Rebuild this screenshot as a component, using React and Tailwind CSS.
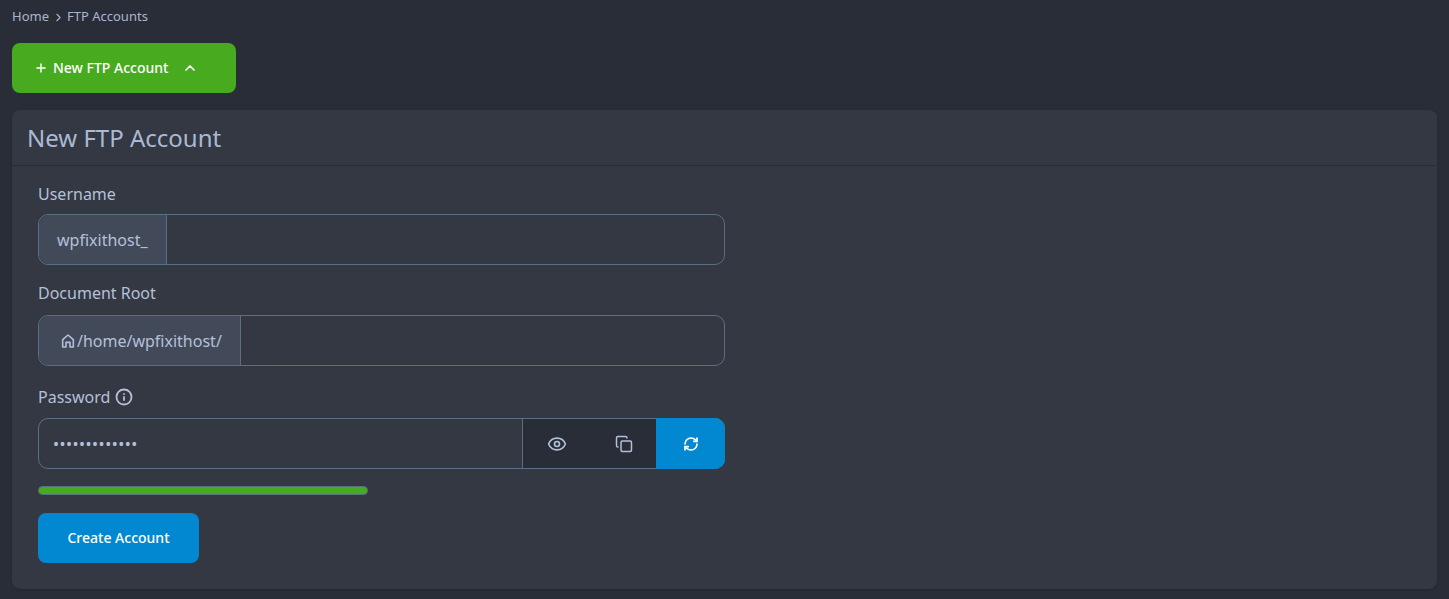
import { Plus, ChevronUp, ChevronRight, Eye, Copy, RefreshCw, Info } from "lucide-react";

const font = { fontFamily: "'Noto Sans', 'Open Sans', sans-serif" };

function Prefixed({ children }) {
  return (
    <div className="flex h-[51px] w-[687px] rounded-[10px] border border-[#587080]">
      <div className="flex items-center rounded-l-[10px] border-r border-[#587080] bg-[#424a59] px-[18px] text-base text-[#b4c0d9]">
        {children}
      </div>
      <div className="flex-1" />
    </div>
  );
}

export default function App() {
  return (
    <div className="h-[599px] overflow-hidden bg-[#292d37] px-3 pt-[8px] text-[#b4c0d9]" style={font}>
      <div className="flex h-[18px] items-center text-[13px] text-[#aab6cf]">
        <span>Home</span>
        <ChevronRight size={13} className="mx-[2.5px]" />
        <span>FTP Accounts</span>
      </div>

      <button className="mt-[17px] flex h-[50px] w-[224px] items-center rounded-lg bg-[#47aa1f] pl-[22px] text-sm font-medium text-white">
        <Plus size={14} strokeWidth={2.5} />
        <span className="ml-[5px]">New FTP Account</span>
        <ChevronUp size={16} strokeWidth={2.5} className="ml-[14px]" />
      </button>

      <div className="mt-[17px] h-[479px] w-[1425px] rounded-lg bg-[#343842] shadow-sm">
        <div className="flex h-[56px] items-center border-b border-[#292d37] pl-[15px] text-2xl text-[#aab9d6]">
          New FTP Account
        </div>
        <div className="px-[26px]">
          <label className="mt-[18px] block h-[21px] text-base leading-[21px]">Username</label>
          <div className="mt-[9px]"><Prefixed>wpfixithost_</Prefixed></div>

          <label className="mt-[18px] block h-[21px] text-base leading-[21px]">Document Root</label>
          <div className="mt-[11px]">
            <Prefixed>
              <svg width="16" height="16" viewBox="0 0 24 24" fill="none" stroke="currentColor" strokeWidth="2.4" className="ml-[3px] mr-[1px]">
                <path d="M4 21V10l8-7 8 7v11h-5v-7H9v7z" strokeLinejoin="round" />
              </svg>
              /home/wpfixithost/
            </Prefixed>
          </div>

          <label className="mt-[20px] flex h-[21px] items-center gap-[5px] text-base">
            Password <Info size={18} strokeWidth={2.4} />
          </label>
          <div className="mt-[11px] flex h-[51px] w-[687px] rounded-[10px] border border-[#587080]">
            <div className="flex flex-1 items-center pl-[14px] text-base tracking-[0.5px]">•••••••••••••</div>
            <div className="flex w-[68px] items-center justify-center border-l border-[#587080] bg-[#292d37]"><Eye size={20} /></div>
            <div className="flex w-[67px] items-center justify-center bg-[#292d37]"><Copy size={18} /></div>
            <div className="-m-px flex w-[69px] items-center justify-center rounded-r-[10px] bg-[#0288d1] text-white"><RefreshCw size={16} strokeWidth={2.5} /></div>
          </div>

          <div className="mt-[17px] h-[9px] w-[330px] rounded-full border border-[#587080] bg-[#47aa1f]" />

          <button className="mt-[18px] h-[50px] w-[161px] rounded-lg bg-[#0288d1] text-sm font-medium text-white">
            Create Account
          </button>
        </div>
      </div>
    </div>
  );
}
